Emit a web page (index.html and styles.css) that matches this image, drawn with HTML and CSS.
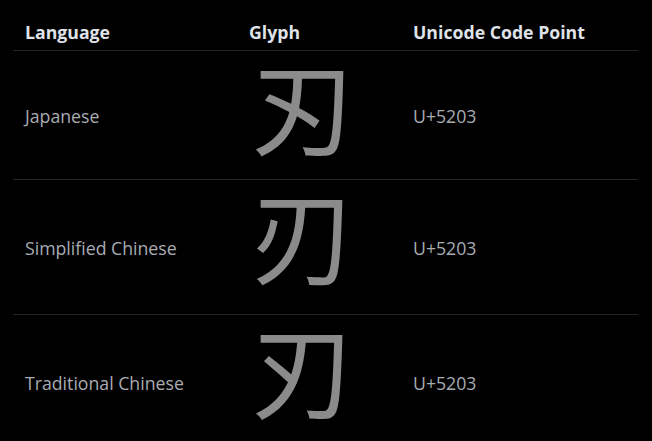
FILE: index.html
```html
<!DOCTYPE html>
<html>
<head>
<meta charset="utf-8">
<link rel="stylesheet" href="styles.css">
</head>
<body>
<div class="wrap">
<table class="glyphs">
  <thead>
    <tr class="head-row">
      <th class="col-lang">Language</th>
      <th class="col-glyph">Glyph</th>
      <th class="col-code">Unicode Code Point</th>
    </tr>
  </thead>
  <tbody>
    <tr class="row row-ja">
      <td class="lang">Japanese</td>
      <td class="glyph" lang="ja">刃</td>
      <td class="code">U+5203</td>
    </tr>
    <tr class="row row-sc">
      <td class="lang">Simplified Chinese</td>
      <td class="glyph glyph-sc" lang="zh-Hans">刃</td>
      <td class="code">U+5203</td>
    </tr>
    <tr class="row row-tc">
      <td class="lang">Traditional Chinese</td>
      <td class="glyph glyph-tc" lang="zh-Hant">刃</td>
      <td class="code">U+5203</td>
    </tr>
  </tbody>
</table>
</div>
</body>
</html>
```

FILE: styles.css
```css
html, body {
  margin: 0;
  padding: 0;
  background: #000;
}
body {
  font-family: "Open Sans", "Noto Sans", sans-serif;
  font-size: 17.7px;
  color: #a9acb3;
}
.wrap {
  padding: 9px 14px 0 13px;
}
.glyphs {
  width: 625px;
  border-collapse: collapse;
  table-layout: fixed;
}
.col-lang { width: 200px; }
.col-glyph { width: 140px; }
th {
  text-align: left;
  font-weight: 700;
  color: #dfe2e8;
  line-height: 24px;
  padding: 11px 12px 6px 12px;
  border-bottom: 1px solid #252525;
}
td {
  padding: 0 12px;
  vertical-align: middle;
  line-height: 24px;
}
.row td {
  border-bottom: 1px solid #252525;
}
.row-ja { height: 129px; }
.row-sc { height: 135px; }
.row-tc { height: 135px; }
.glyph {
  font-family: "Noto Sans CJK JP", sans-serif;
  font-size: 104px;
  line-height: 104px;
  color: #8b8b8b;
  vertical-align: top;
  padding: 0 10px 0 14px;
}
.glyph-sc { font-family: "Noto Sans CJK SC", sans-serif; }
.glyph-tc { font-family: "Noto Sans CJK TC", sans-serif; }
.lang, .code {
  padding-top: 2px;
}
```
